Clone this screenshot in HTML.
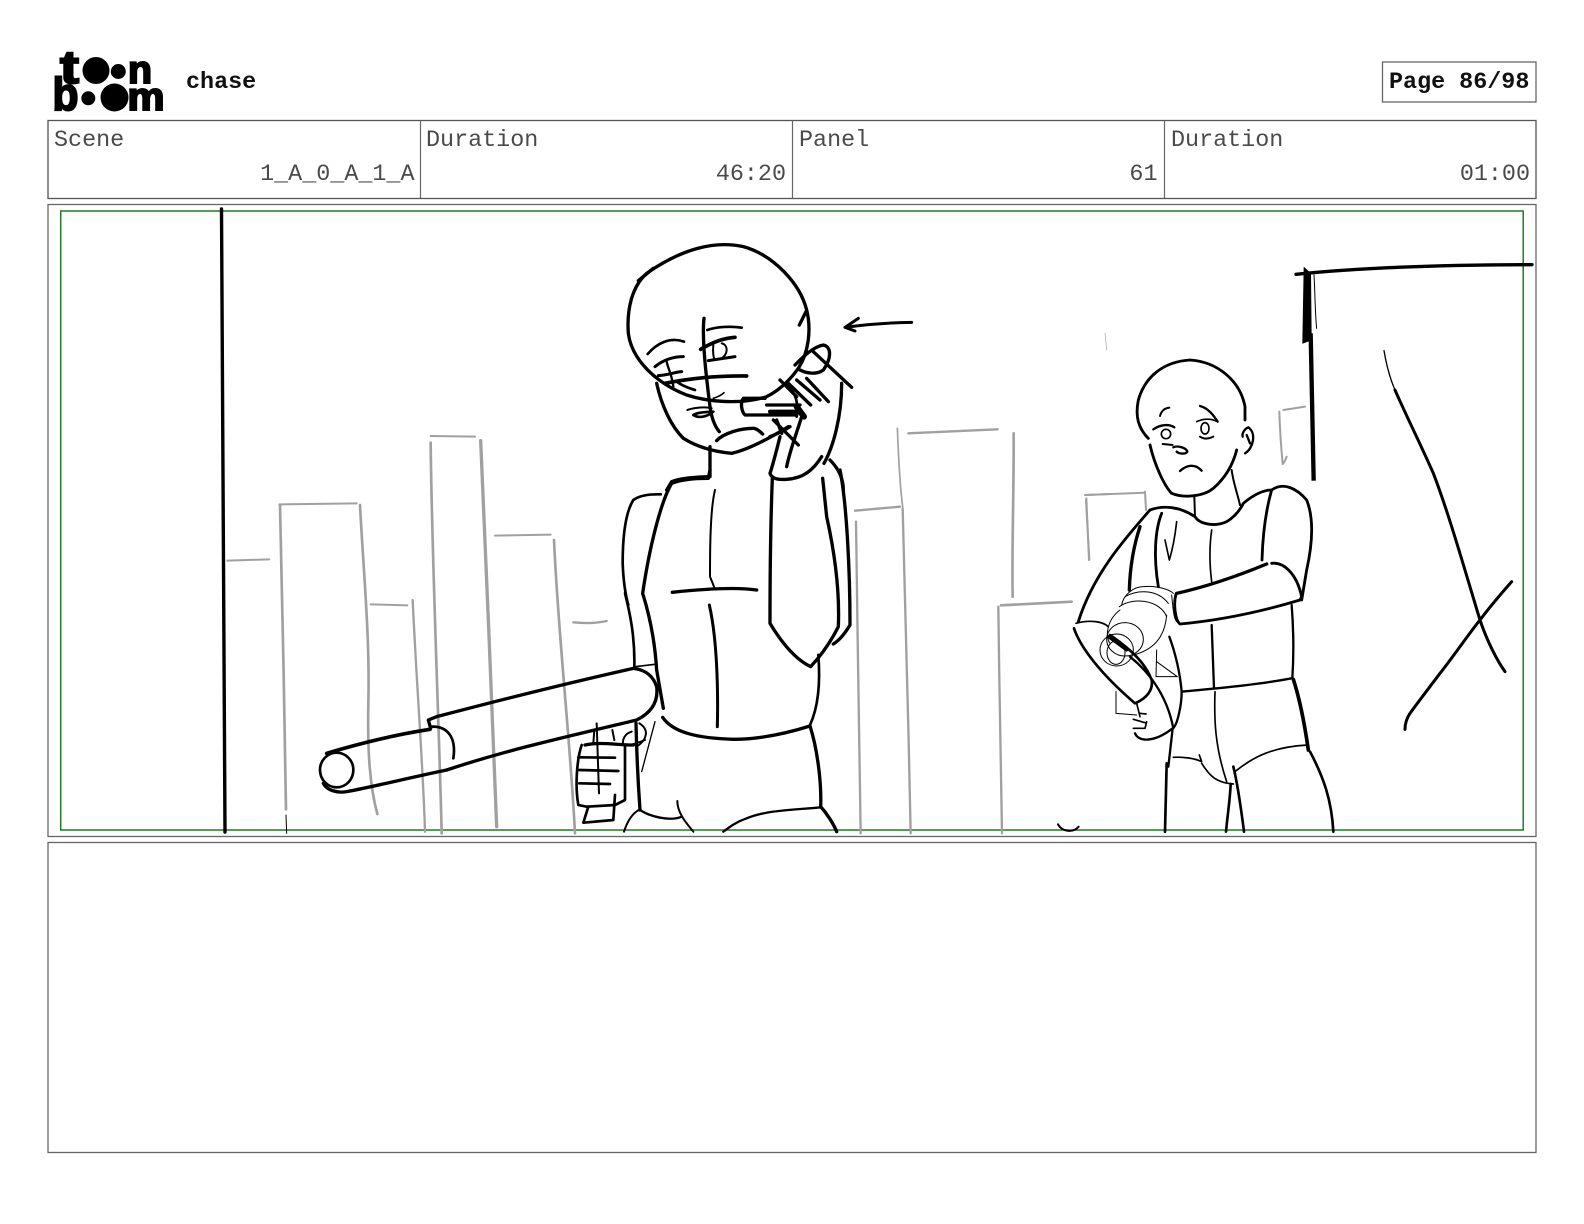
<!DOCTYPE html>
<html>
<head>
<meta charset="utf-8">
<title>chase</title>
<style>
html,body{margin:0;padding:0;background:#fff;width:1584px;height:1224px;overflow:hidden}
svg{display:block}
.m{font-family:"Liberation Mono",monospace;font-size:23.4px;fill:#4a4a4a}
.b{font-family:"Liberation Mono",monospace;font-size:23.4px;font-weight:bold;fill:#111}
.l{font-family:"Liberation Sans",sans-serif;font-weight:bold;font-size:46px;fill:#000;stroke:#000;stroke-width:2}
.k{fill:none;stroke:#000;stroke-linecap:round;stroke-linejoin:round}
.g{fill:none;stroke:#a0a0a0;stroke-linecap:round;stroke-linejoin:round}
</style>
</head>
<body>
<svg width="1584" height="1224" viewBox="0 0 1584 1224" xmlns="http://www.w3.org/2000/svg">
<!-- logo -->
<text class="l" x="60" y="83" textLength="19" lengthAdjust="spacingAndGlyphs">t</text>
<circle cx="96" cy="70.500" r="13.500"/>
<circle cx="118.300" cy="71.500" r="7.500"/>
<text class="l" x="128" y="83" style="font-size:39px" textLength="24" lengthAdjust="spacingAndGlyphs">n</text>
<text class="l" x="52.500" y="110" textLength="26" lengthAdjust="spacingAndGlyphs">b</text>
<circle cx="88.300" cy="98.300" r="7"/>
<circle cx="114.500" cy="97.500" r="14"/>
<text class="l" x="127.500" y="110" style="font-size:39px" textLength="37" lengthAdjust="spacingAndGlyphs">m</text>

<text class="b" x="186" y="88">chase</text>
<rect x="1382.500" y="62" width="153.500" height="40" fill="#fff" stroke="#666" stroke-width="1.3"/>
<text class="b" x="1389" y="88">Page 86/98</text>

<!-- header table -->
<rect x="48" y="120.500" width="1488" height="78" fill="#fff" stroke="#555" stroke-width="1.3"/>
<path d="M420.500 120V198M792.500 120V198M1164.500 120V198" stroke="#666" stroke-width="1.2" fill="none"/>
<text class="m" x="54" y="146">Scene</text>
<text class="m" x="426" y="146">Duration</text>
<text class="m" x="799" y="146">Panel</text>
<text class="m" x="1171" y="146">Duration</text>
<text class="m" x="414.500" y="180" text-anchor="end">1_A_0_A_1_A</text>
<text class="m" x="786" y="180" text-anchor="end">46:20</text>
<text class="m" x="1157.500" y="180" text-anchor="end">61</text>
<text class="m" x="1530" y="180" text-anchor="end">01:00</text>

<!-- panel & notes -->
<rect x="48" y="204.500" width="1488" height="632" fill="#fff" stroke="#666" stroke-width="1.3"/>
<rect x="48" y="842.500" width="1488" height="310" fill="#fff" stroke="#666" stroke-width="1.3"/>
<rect x="60.700" y="211" width="1462.500" height="619" fill="none" stroke="#1f7d24" stroke-width="1.5"/>

<!-- left buildings -->
<g transform="translate(210,420) scale(.33333)">
<g class="g" stroke-width="6">
<path d="M52 422L178 418"/>
<path d="M208 253L440 250"/>
<path stroke-width="8" d="M210 255C215 500 225 900 228 1168"/>
<path stroke-width="8" d="M450 255C460 450 480 650 475 850C472 1000 480 1100 502 1182"/>
<path d="M482 553L592 556"/>
<path stroke-width="7" d="M608 540C620 800 640 1050 645 1235"/>
<path d="M662 48L795 50"/>
<path stroke-width="8" d="M662 68C665 400 690 1000 695 1240"/>
<path stroke-width="10" d="M812 62C825 400 850 900 860 1220"/>
<path d="M855 347L1022 344"/>
<path stroke-width="8" d="M1032 360C1045 650 1080 950 1095 1240"/>
<path stroke-width="7" d="M1090 607C1120 610 1160 610 1190 603"/>
</g>
<path class="k" stroke-width="3" d="M228 1185L230 1240"/>
</g>
<!-- middle buildings -->
<g transform="translate(840,420) scale(.33333)">
<g class="g" stroke-width="7">
<path d="M45 272L180 260"/>
<path d="M48 305C52 600 58 1000 62 1240"/>
<path stroke-width="5" d="M172 25C175 100 180 200 188 260"/>
<path d="M188 265C195 500 205 900 212 1240"/>
<path d="M205 40L473 28"/>
<path stroke-width="8" d="M521 40C522 200 515 400 518 530"/>
<path stroke-width="8" d="M483 556L695 545"/>
<path d="M475 560C478 800 483 1100 486 1240"/>
<path stroke-width="6" d="M737 225L810 222"/>
<path stroke-width="6" d="M739 235L747 420"/>
</g>
<path class="k" stroke-width="6" d="M654 1213C665 1235 700 1240 716 1220"/>
</g>
<!-- left vertical -->
<path class="k" stroke-width="3.400" stroke-linecap="butt" d="M221.500 209L225 832"/>

<!-- main character head -->
<g transform="translate(600,230) scale(.33333)">
<g class="k" stroke-width="10">
<path d="M115 152L160 115"/>
<path d="M140 130C95 170 80 240 85 310C95 390 170 460 260 495C320 515 420 525 500 500C540 480 570 450 595 415C625 370 635 300 620 240C600 160 520 75 430 50C340 30 240 60 140 130"/>
<path d="M598 285L618 245"/>
<path d="M170 460C185 530 215 590 250 625C290 650 340 665 395 670C440 660 500 630 565 590"/>
<path d="M330 650L330 740C290 740 240 745 215 755L200 780"/>
<path d="M312 265C305 330 320 450 330 530C335 565 345 590 358 605"/>
<path stroke-width="8" d="M322 300C350 290 395 288 425 293"/>
<path stroke-width="11" d="M302 358C340 335 370 325 405 322"/>
<path stroke-width="6" d="M340 345C338 365 340 385 345 390M365 340C385 345 385 370 365 385"/>
<path stroke-width="9" d="M325 392L405 380"/>
<path stroke-width="8" d="M143 372C170 340 210 320 252 335"/>
<path stroke-width="9" d="M165 410C190 390 220 380 250 380"/>
<path stroke-width="7" d="M200 395C205 420 215 430 220 470"/>
<path stroke-width="9" d="M175 437C205 435 230 425 245 425"/>
<path stroke-width="11" d="M195 460C270 445 360 437 440 438"/>
<path stroke-width="8" d="M230 455C250 470 270 475 285 480"/>
<path stroke-width="5" d="M340 505C355 500 365 495 372 488"/>
<path stroke-width="6" d="M262 540C285 532 320 530 335 535"/>
<path stroke-width="8" d="M280 555C295 565 320 562 340 545C320 545 290 548 280 555"/>
<path d="M350 632C370 610 420 595 460 595C470 595 480 605 488 612"/>
<path stroke-width="9" d="M935 277C870 278 800 283 735 292M775 265L735 292L765 303"/>
<path d="M585 405C610 380 640 350 670 345C695 350 695 385 670 420C650 435 620 430 600 420"/>
<path d="M640 365L755 472"/>
<path d="M725 460C725 560 700 650 672 700"/>
<path d="M540 450L590 500M565 460L632 525M590 450L660 510M620 445L685 515"/>
<path stroke-width="8" d="M560 465C590 490 595 520 590 560"/>
<path d="M495 505L430 505C420 520 425 545 435 555L590 555"/>
<path d="M500 525L600 525"/>
<path stroke-width="12" d="M510 545L590 545"/>
<path stroke-width="18" d="M590 530L612 560"/>
<path d="M520 570L595 645M570 590C540 610 520 615 510 620M530 570L545 610"/>
<path d="M605 560C590 610 570 660 560 710"/>
<path d="M540 620C530 660 520 700 510 730C515 745 530 750 560 748C610 745 640 720 665 680"/>
<path d="M690 690C720 720 730 750 730 780"/>
</g>
</g>

<!-- torso -->
<g transform="translate(600,470) scale(.33333)">
<g class="k" stroke-width="10">
<path d="M330 0L325 25C280 25 240 30 215 40C185 90 150 220 128 370C150 440 165 520 170 600L190 715"/>
<path stroke-width="8" d="M182 73C150 72 120 75 100 90C75 130 68 200 68 280C70 330 75 370 85 405"/>
<path stroke-width="8" d="M75 370C90 430 105 500 103 590"/>
<path stroke-width="5" d="M105 590L165 583"/>
<path stroke-width="6" d="M345 60C330 120 330 250 330 320L342 350"/>
<path d="M217 367C300 358 400 350 470 360"/>
<path stroke-width="9" d="M328 405C350 500 355 650 352 770"/>
<path d="M517 25C510 200 510 350 510 460C540 510 580 565 632 590C660 560 690 520 715 470C720 350 700 230 680 140L668 25"/>
<path d="M720 0C740 100 750 300 750 465C735 490 720 510 700 522"/>
<path stroke-width="8" d="M655 555C660 620 660 700 630 765"/>
<path d="M188 742C220 790 300 805 400 808C480 808 560 790 630 768"/>
<path d="M630 768C650 830 665 930 662 1010C680 1030 700 1060 710 1085"/>
<path stroke-width="7" d="M662 1012C580 1020 500 1020 440 1045C410 1055 390 1070 370 1085"/>
<path stroke-width="6" d="M232 993C232 1030 260 1060 280 1085"/>
<path stroke-width="7" d="M120 1020C150 1040 210 1055 245 1040"/>
<path stroke-width="6" d="M120 1018C95 1030 80 1060 72 1085"/>
<path d="M108 760C110 850 115 950 120 1020"/>
<path stroke-width="6" d="M118 760C150 780 140 810 110 830"/>
<path stroke-width="4" d="M165 755L125 905"/>
<path stroke-width="6" d="M135 810C110 820 80 830 70 825C65 810 75 790 95 785"/>
</g>
</g>

<!-- pipe -->
<g transform="translate(300,640) scale(.33333)">
<g class="k" stroke-width="10">
<path stroke-width="11" d="M80 340C180 310 280 285 390 268"/>
<ellipse cx="110" cy="390" rx="50" ry="52" stroke-width="8"/>
<path d="M70 430C80 450 110 460 140 455C220 440 320 415 440 390C620 330 800 290 1010 240C1060 215 1075 180 1070 140C1060 110 1040 90 1000 85C800 130 600 180 410 230L385 240L392 265"/>
<path stroke-width="8" d="M395 260C440 258 470 290 460 355"/>
<path stroke-width="6" d="M890 250L897 460M883 270L880 310M937 270L943 300"/>
<path stroke-width="10" d="M855 315C900 305 950 315 1000 315"/>
<path stroke-width="8" d="M845 315C830 360 825 440 835 495L860 500L945 495L975 480L975 320"/>
<path stroke-width="8" d="M835 352L945 353M838 390L955 393M838 430L930 432"/>
<path stroke-width="8" d="M865 500L850 548L940 540L945 465"/>
</g>
</g>

<!-- second character upper -->
<g transform="translate(1050,340) scale(.33333)">
<g class="g" stroke-width="6">
<path stroke-width="2" d="M165 -20L170 30"/>
<path d="M105 465L285 458M108 480L118 660M285 455L288 510"/>
<path d="M765 200L700 210M688 215C690 280 695 340 698 372C705 365 708 355 710 350"/>
</g>
<g class="k" stroke-width="8.500">
<path d="M295 295C265 265 255 230 265 180C285 110 340 65 420 60C500 65 570 120 585 200L585 240"/>
<path d="M300 315C315 380 345 440 365 460C400 475 460 470 490 445C530 410 550 370 560 330"/>
<path stroke-width="7" d="M585 340C610 325 620 280 595 262C585 265 575 280 578 290M590 285L600 310"/>
<path stroke-width="6" d="M330 228C335 210 345 205 358 203"/>
<path stroke-width="7" d="M450 198C475 205 490 225 503 245"/>
<path stroke-width="7" d="M310 268C330 255 355 250 373 262"/>
<circle cx="348" cy="282" r="14" stroke-width="5"/>
<path stroke-width="6" d="M338 312L368 315"/>
<path stroke-width="7" d="M370 322C385 315 410 325 412 335C405 345 385 340 380 335"/>
<path stroke-width="5" d="M440 245C460 235 485 235 502 245"/>
<ellipse cx="465" cy="265" rx="12" ry="17" stroke-width="5"/>
<path stroke-width="6" d="M450 290C465 300 480 295 490 290"/>
<path stroke-width="7" d="M390 393C410 375 435 370 455 392"/>
<path stroke-width="6" d="M433 470L435 530M545 390C550 430 565 470 570 495"/>
<path d="M300 510C340 495 390 500 435 530C450 555 500 560 530 545C555 530 570 510 580 490C610 465 640 450 665 450C700 425 740 445 770 480C790 530 790 600 770 690L755 780"/>
<path d="M300 510C230 590 130 700 85 845"/>
<path stroke-width="10" d="M270 560C250 620 240 680 238 750"/>
<path d="M335 520C315 570 310 650 325 740"/>
<path stroke-width="5" d="M380 545C375 590 370 620 358 660L345 600"/>
<path stroke-width="5" d="M485 570C478 620 478 670 485 725"/>
<path d="M665 450C645 520 638 590 636 660"/>
<path stroke-width="10" d="M380 760C470 740 570 705 650 672"/>
<path d="M665 670C700 665 740 700 755 770L750 780C650 810 520 840 390 852C375 840 370 790 378 762"/>
</g>
</g>

<!-- second character lower -->
<g transform="translate(1040,560) scale(.33333)">
<g class="k" stroke-width="7">
<path stroke-width="8" d="M102 205C120 260 180 340 285 430C320 415 340 390 335 360C320 320 290 280 210 225"/>
<path stroke-width="5" d="M108 190C150 178 190 185 205 200"/>
<path stroke-width="5" d="M290 430L300 470M300 460L318 462M280 478L315 488M320 485L315 505L280 505"/>
<path d="M285 520C295 545 340 550 398 505"/>
<path d="M270 290C320 330 380 400 400 505"/>
<g stroke-width="3">
<path d="M245 135C250 105 280 80 310 80C350 75 390 90 400 100"/>
<path d="M238 140C280 110 360 120 380 170"/>
<path d="M255 110C290 90 350 85 385 130"/>
<path d="M240 150C200 180 195 230 210 250"/>
<path d="M380 165C375 230 340 270 280 285"/>
<path d="M395 105C400 150 400 190 420 190"/>
<ellipse cx="255" cy="238" rx="55" ry="50"/>
<ellipse cx="230" cy="270" rx="50" ry="48"/>
<ellipse cx="228" cy="278" rx="27" ry="35"/>
<path d="M228 395L228 460L290 465"/>
<path d="M350 270L348 350L412 350M350 305L412 350"/>
</g>
<path stroke-width="9" d="M205 230L260 270"/>
<path d="M388 230C410 290 420 340 425 395C425 440 410 500 398 505L385 620"/>
<path stroke-width="8" d="M380 610L375 815"/>
<path d="M425 395C530 385 650 375 755 355"/>
<path d="M515 195L522 385"/>
<path stroke-width="5" d="M525 395C522 480 525 560 560 665"/>
<path d="M755 135C760 200 762 280 757 355"/>
<path stroke-width="11" d="M760 358C780 420 795 500 805 570"/>
<path stroke-width="5" d="M805 555C700 560 640 590 585 635"/>
<path stroke-width="8" d="M810 575C850 650 875 720 880 815"/>
<path stroke-width="5" d="M400 592C430 590 465 595 485 605L478 585"/>
<path stroke-width="5" d="M485 610C510 650 530 668 580 672"/>
<path stroke-width="8" d="M580 620C595 680 605 760 612 815M572 672C570 720 562 770 558 815"/>
</g>
</g>

<!-- right marks -->
<g transform="translate(1270,240) scale(.33333)">
<g class="k" stroke-width="10">
<path d="M78 103C200 90 400 75 786 74"/>
<path fill="#000" stroke-width="2" d="M102 82L122 100L124 300L98 310Z"/>
<path stroke-width="13" stroke-linecap="butt" d="M122 280L131 722"/>
<path stroke-width="3" d="M132 105C135 150 135 220 140 265"/>
<path stroke-width="4" d="M342 332C350 380 362 420 375 450"/>
<path stroke-width="9" d="M375 450C410 530 455 620 490 700C540 830 590 1010 630 1140C650 1200 680 1260 705 1295"/>
<path stroke-width="9" d="M725 1025C690 1065 660 1100 630 1140C590 1190 550 1250 510 1300C480 1340 445 1385 420 1420C410 1435 405 1450 405 1468"/>
</g>
</g>
</svg>
</body>
</html>
